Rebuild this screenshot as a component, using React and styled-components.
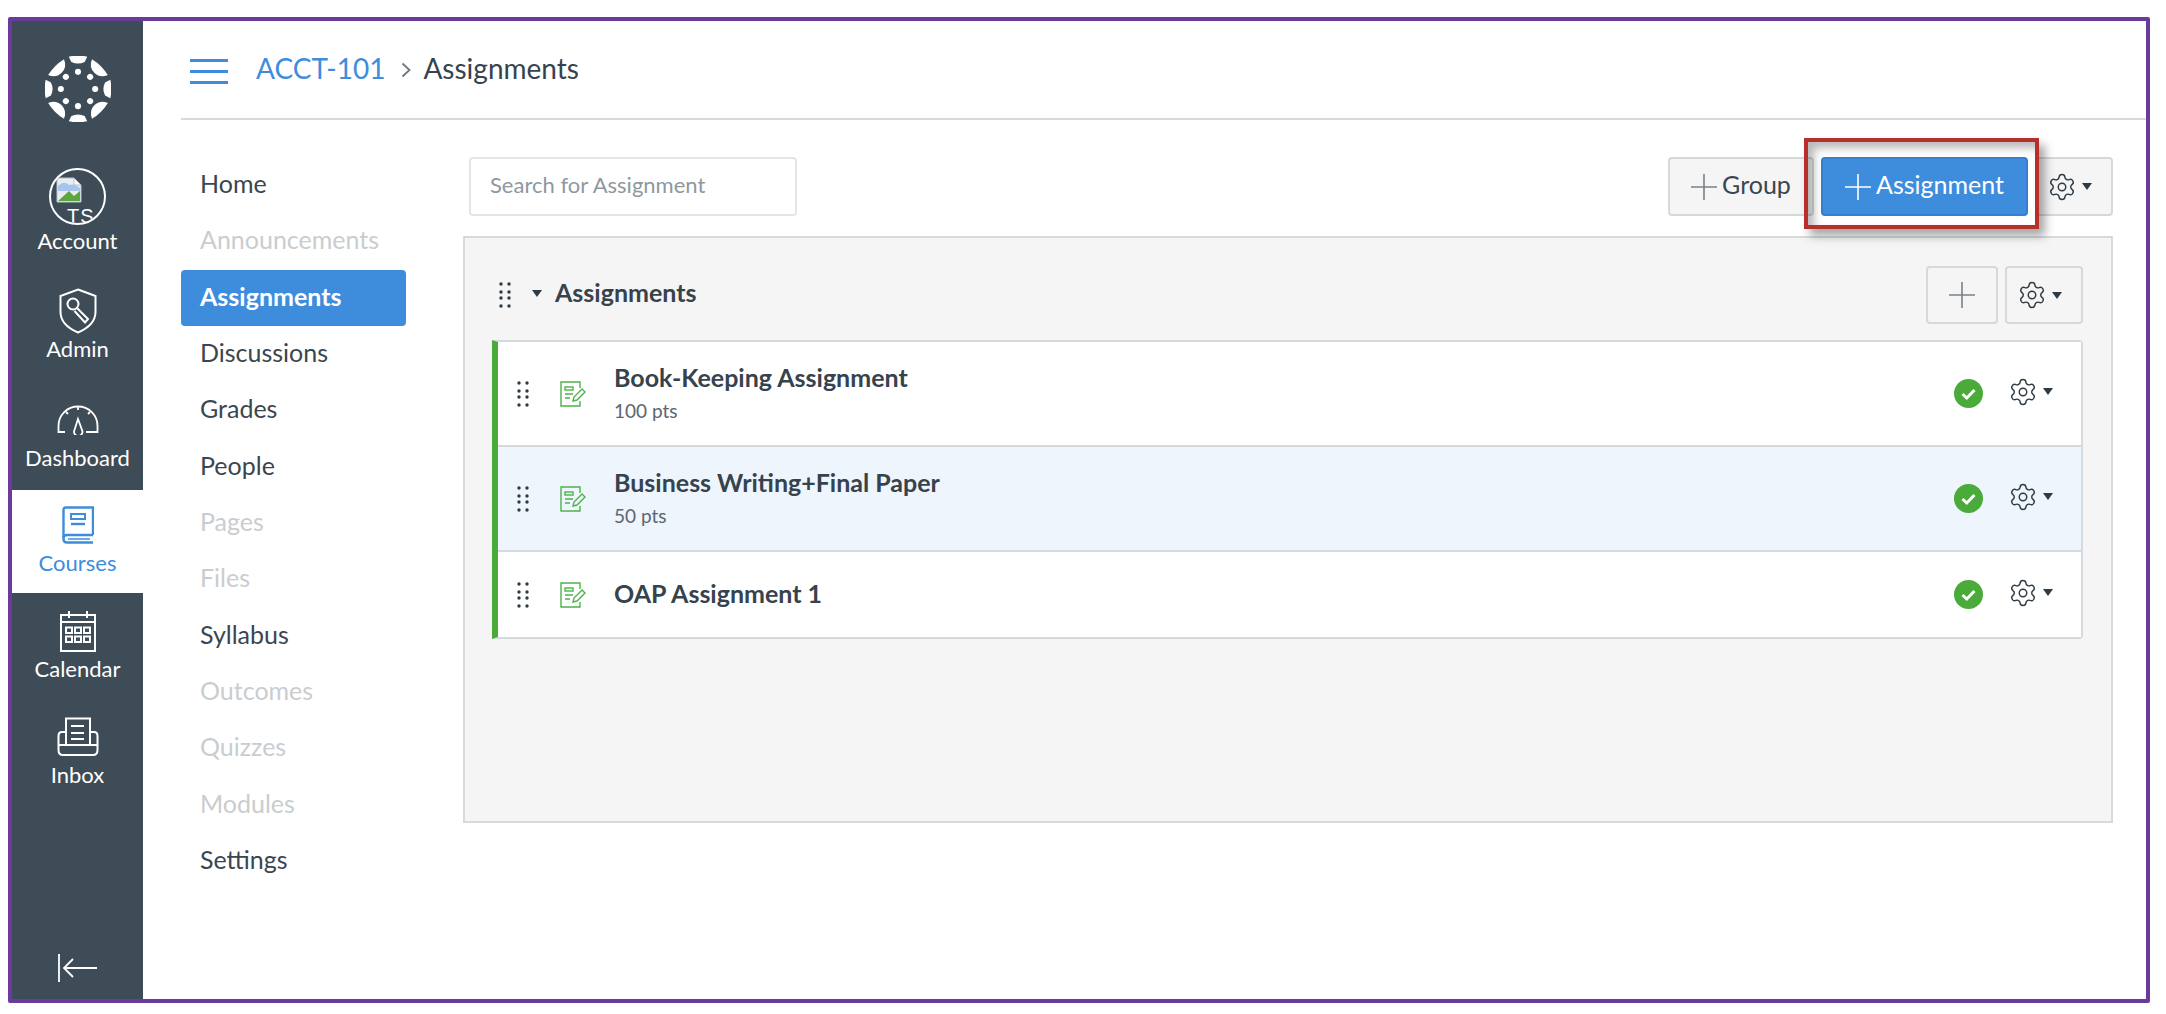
import React from "react";
import styled, { createGlobalStyle } from "styled-components";
import { Settings } from "lucide-react";

const GlobalStyle = createGlobalStyle`
  * { box-sizing: border-box; }
  body {
    margin: 0;
    background: #fff;
    font-family: "Lato", "Open Sans", sans-serif;
    color: #2d3b45;
  }
`;

const CanvasLogo = () => (
  <svg width="66" height="66" viewBox="0 0 100 100" fill="#fff">
    {[0, 90, 180, 270].map((r) => (
      <g key={r} transform={`rotate(${r} 50 50)`}>
        <path d="M36 1Q50 -2 64 1L60 9Q50 14 40 9Z" />
        <circle cx="50" cy="24" r="4.6" />
      </g>
    ))}
    {[45, 135, 225, 315].map((r) => (
      <g key={r} transform={`rotate(${r} 50 50)`}>
        <path d="M33 3Q50 -1 67 3Q62 15 50 15Q38 15 33 3Z" />
        <circle cx="50" cy="24" r="4.6" />
      </g>
    ))}
  </svg>
);

const BrokenImage = () => (
  <svg width="26" height="26" viewBox="0 0 26 26">
    <path d="M1 1H18L25 8V25H1Z" fill="#e8edf3" stroke="#b9c0c8" />
    <path d="M2 9Q8 3 13 8Q18 6 24 11V14H2Z" fill="#a9c4ec" />
    <path d="M2 24L13 14L18 19L24 14V24Z" fill="#5da63f" />
    <path d="M18 1V8H25Z" fill="#fff" stroke="#b9c0c8" />
  </svg>
);

const AdminIcon = () => (
  <svg width="38" height="46" viewBox="0 0 38 46" fill="none" stroke="currentColor" strokeWidth="2">
    <path d="M19 1.5L36.5 8V24Q36.5 37 19 44.5Q1.5 37 1.5 24V8Z" />
    <circle cx="14" cy="16" r="5.5" />
    <path d="M18 20L29 31L26 34.5L15.5 23" />
  </svg>
);

const DashboardIcon = () => (
  <svg width="42" height="30" viewBox="0 0 42 30" fill="none" stroke="currentColor" strokeWidth="1.8">
    <path d="M8 27H1.5V21A19.5 19.5 0 0 1 40.5 21V27H29" />
    <path d="M21 14L25 25A4.2 4.2 0 1 1 17.5 25Z" />
    <path d="M21 2V5M9 7L11 9M33 7L31 9" />
  </svg>
);

const CourseIcon = () => (
  <svg width="32" height="38" viewBox="0 0 32 38" fill="none" stroke="currentColor" strokeWidth="2.4">
    <path d="M31 29V1.5H4Q1.5 1.5 1.5 4V33Q1.5 36.5 5 36.5H31" />
    <path d="M1.5 32Q1.5 29 5 29H31" />
    <path d="M6 33H28" strokeWidth="1.5" />
    <rect x="9" y="8" width="14" height="5" strokeWidth="2" />
    <path d="M9 18H23" />
  </svg>
);

const CalendarIcon = () => (
  <svg width="36" height="42" viewBox="0 0 36 42" fill="none" stroke="currentColor" strokeWidth="2">
    <rect x="1" y="5" width="34" height="36" />
    <path d="M9 1V8M27 1V8M1 12H35" />
    {[9, 18, 27].map((x) =>
      [20, 29].map((y) => (
        <rect key={`${x}-${y}`} x={x - 3} y={y - 2.5} width="6" height="5.5" />
      ))
    )}
  </svg>
);

const InboxIcon = () => (
  <svg width="42" height="40" viewBox="0 0 42 40" fill="none" stroke="currentColor" strokeWidth="2">
    <path d="M9 29V1.5H33V29" />
    <path d="M14 9H27M14 16H27M14 22H27" />
    <path d="M9 15H5Q1.5 15 1.5 19V33Q1.5 38 6 38H36Q40.5 38 40.5 33V19Q40.5 15 37 15H33" />
    <path d="M1.5 28H40.5" />
  </svg>
);

const CollapseIcon = () => (
  <svg width="40" height="28" viewBox="0 0 40 28" fill="none" stroke="#fff" strokeWidth="1.8">
    <path d="M1 0V28M39 14H7M15 5L6 14L15 23" />
  </svg>
);

const PlusIcon = ({ color = "#77828a" }) => (
  <svg width="26" height="26" viewBox="0 0 26 26" stroke={color} strokeWidth="1.6">
    <path d="M0 13H26M13 0V26" />
  </svg>
);

const ChevronIcon = () => (
  <svg width="10" height="16" viewBox="0 0 10 16" fill="none" stroke="#6b7780" strokeWidth="1.8">
    <path d="M1.5 1.5L8.5 8L1.5 14.5" />
  </svg>
);

const DragDots = () => (
  <svg width="12" height="26" viewBox="0 0 12 26" fill="#2d3b45">
    {[2, 10].map((x) =>
      [2, 10, 16, 24].map((y) => <circle key={`${x}-${y}`} cx={x} cy={y} r="1.7" />)
    )}
  </svg>
);

const AssignmentIcon = () => (
  <svg width="26" height="26" viewBox="0 0 26 26" fill="none" stroke="#4db34a" strokeWidth="1.4">
    <path d="M20 7V1H1V25H20V20" />
    <rect x="5" y="6" width="8" height="3" />
    <path d="M5 13H13M5 17H10" />
    <path d="M13 20L14 16L22 8L25 11L17 19Z" />
  </svg>
);

const CheckBadge = () => (
  <svg width="29" height="29" viewBox="0 0 29 29">
    <circle cx="14.5" cy="14.5" r="14.5" fill="#4aab3a" />
    <path d="M8.5 15L12.8 19L20.5 11" fill="none" stroke="#fff" strokeWidth="3" />
  </svg>
);

const navLinks = [
  { label: "Home" },
  { label: "Announcements", off: true },
  { label: "Assignments", active: true },
  { label: "Discussions" },
  { label: "Grades" },
  { label: "People" },
  { label: "Pages", off: true },
  { label: "Files", off: true },
  { label: "Syllabus" },
  { label: "Outcomes", off: true },
  { label: "Quizzes", off: true },
  { label: "Modules", off: true },
  { label: "Settings" },
];

const assignments = [
  { title: "Book-Keeping Assignment", pts: "100 pts", height: 103 },
  { title: "Business Writing+Final Paper", pts: "50 pts", height: 105, highlight: true },
  { title: "OAP Assignment 1", height: 87 },
];

const Gear = ({ size = 30 }) => <Settings size={size} strokeWidth={1.15} color="#2d3b45" />;

export default function App() {
  return (
    <>
      <GlobalStyle />
      <Frame>
        <Sidebar>
          <LogoWrap>
            <CanvasLogo />
          </LogoWrap>
          <GlobalItem $height={115} $top={0}>
            <Avatar>
              <BrokenImage />
              <AvatarAlt>TS</AvatarAlt>
            </Avatar>
            <GlobalLabel>Account</GlobalLabel>
          </GlobalItem>
          <GlobalItem $height={109} $top={12}>
            <IconBox>
              <AdminIcon />
            </IconBox>
            <GlobalLabel>Admin</GlobalLabel>
          </GlobalItem>
          <GlobalItem $height={105} $top={12}>
            <IconBox>
              <DashboardIcon />
            </IconBox>
            <GlobalLabel>Dashboard</GlobalLabel>
          </GlobalItem>
          <GlobalItem $height={103} $top={12} $active>
            <IconBox>
              <CourseIcon />
            </IconBox>
            <GlobalLabel>Courses</GlobalLabel>
          </GlobalItem>
          <GlobalItem $height={109} $top={15}>
            <IconBox>
              <CalendarIcon />
            </IconBox>
            <GlobalLabel>Calendar</GlobalLabel>
          </GlobalItem>
          <GlobalItem $height={109} $top={12}>
            <IconBox>
              <InboxIcon />
            </IconBox>
            <GlobalLabel>Inbox</GlobalLabel>
          </GlobalItem>
          <CollapseWrap>
            <CollapseIcon />
          </CollapseWrap>
        </Sidebar>

        <Main>
          <Header>
            <Hamburger>
              <span />
              <span />
              <span />
            </Hamburger>
            <Crumb href="#">ACCT-101</Crumb>
            <CrumbSep>
              <ChevronIcon />
            </CrumbSep>
            <CrumbCurrent>Assignments</CrumbCurrent>
          </Header>

          <Body>
            <CourseNav>
              {navLinks.map((l) => (
                <CourseLink key={l.label} $off={l.off} $active={l.active}>
                  {l.label}
                </CourseLink>
              ))}
            </CourseNav>

            <Content>
              <Toolbar>
                <Search placeholder="Search for Assignment" />
                <Actions>
                  <Button $width={146}>
                    <PlusIcon />
                    <ButtonText>Group</ButtonText>
                  </Button>
                  <Button $width={207} $primary>
                    <PlusIcon color="#fff" />
                    <ButtonText>Assignment</ButtonText>
                  </Button>
                  <Button $width={78} $padRight={10}>
                    <Gear />
                    <Caret />
                  </Button>
                  <Callout />
                </Actions>
              </Toolbar>

              <Panel>
                <GroupHeader>
                  <DragDots />
                  <GroupCaret />
                  <GroupTitle>Assignments</GroupTitle>
                  <GroupActions>
                    <Button $width={72} $height={58}>
                      <PlusIcon />
                    </Button>
                    <Button $width={78} $height={58} $padRight={10}>
                      <Gear />
                      <Caret />
                    </Button>
                  </GroupActions>
                </GroupHeader>

                <List>
                  {assignments.map((a) => (
                    <Row key={a.title} $height={a.height} $highlight={a.highlight}>
                      <DragDots />
                      <AssignmentIcon />
                      <RowText>
                        <RowTitle>{a.title}</RowTitle>
                        {a.pts && <RowPts>{a.pts}</RowPts>}
                      </RowText>
                      <CheckBadge />
                      <RowGear>
                        <Gear />
                        <Caret />
                      </RowGear>
                    </Row>
                  ))}
                </List>
              </Panel>
            </Content>
          </Body>
        </Main>
      </Frame>
    </>
  );
}

const Frame = styled.div`
  display: flex;
  width: 2142px;
  height: 986px;
  margin: 17px 0 0 8px;
  border: 4px solid #6c3a9d;
  border-radius: 2px;
  overflow: hidden;
`;

const Sidebar = styled.nav`
  display: flex;
  flex-direction: column;
  flex: 0 0 131px;
  background: #3e4c57;
  color: #fff;
`;

const LogoWrap = styled.div`
  display: flex;
  justify-content: center;
  height: 140px;
  padding-top: 35px;
`;

const GlobalItem = styled.div`
  display: flex;
  flex-direction: column;
  align-items: center;
  height: ${(p) => p.$height}px;
  padding-top: ${(p) => p.$top}px;
  background: ${(p) => (p.$active ? "#fff" : "transparent")};
  color: ${(p) => (p.$active ? "#3e8ddd" : "#fff")};
`;

const IconBox = styled.div`
  display: flex;
  align-items: center;
  justify-content: center;
  height: 46px;
`;

const GlobalLabel = styled.div`
  margin-top: 3px;
  font-size: 22px;
  line-height: 24px;
`;

const Avatar = styled.div`
  position: relative;
  flex: 0 0 57px;
  width: 57px;
  margin-top: 7px;
  margin-bottom: 1px;
  border: 2px solid #fff;
  border-radius: 50%;
  overflow: hidden;
  padding: 7px 0 0 5px;
`;

const AvatarAlt = styled.span`
  position: absolute;
  left: 16px;
  top: 35px;
  font-family: "Liberation Sans", sans-serif;
  font-size: 20px;
  letter-spacing: 1px;
`;

const CollapseWrap = styled.div`
  display: flex;
  justify-content: center;
  margin-top: auto;
  margin-bottom: 17px;
`;

const Main = styled.div`
  flex: 1;
  display: flex;
  flex-direction: column;
  min-width: 0;
`;

const Header = styled.header`
  display: flex;
  align-items: center;
  height: 99px;
  margin-left: 38px;
  padding: 0 0 4px 9px;
  border-bottom: 2px solid #d5dade;
`;

const Hamburger = styled.div`
  display: flex;
  flex-direction: column;
  justify-content: space-between;
  width: 38px;
  height: 25px;
  margin-right: 28px;
  margin-top: 8px;

  span {
    height: 3px;
    background: #3e8ddd;
  }
`;

const Crumb = styled.a`
  font-size: 28px;
  color: #3e8ddd;
  text-decoration: none;
`;

const CrumbSep = styled.span`
  display: flex;
  margin: 4px 12px 0 16px;
`;

const CrumbCurrent = styled.span`
  font-size: 28px;
  color: #36434d;
`;

const Body = styled.div`
  display: flex;
  padding: 37px 33px 0 38px;
`;

const CourseNav = styled.div`
  display: flex;
  flex-direction: column;
  flex: 0 0 225px;
`;

const CourseLink = styled.div`
  display: flex;
  align-items: center;
  height: 56.33px;
  padding: 0 0 4px 19px;
  font-size: 25px;
  font-weight: ${(p) => (p.$active ? 700 : 400)};
  border-radius: 4px;
  background: ${(p) => (p.$active ? "#3e8ddd" : "transparent")};
  color: ${(p) => (p.$active ? "#fff" : p.$off ? "#c9cdd0" : "#3a4650")};
`;

const Content = styled.div`
  flex: 1;
  display: flex;
  flex-direction: column;
  margin-left: 57px;
  min-width: 0;
`;

const Toolbar = styled.div`
  display: flex;
  justify-content: space-between;
  margin-bottom: 20px;
  padding-left: 6px;
`;

const Search = styled.input`
  width: 328px;
  height: 59px;
  padding: 0 19px 4px;
  border: 2px solid #e3e6e9;
  border-radius: 4px;
  outline: none;
  font-family: inherit;
  font-size: 22px;
  color: #2d3b45;

  &::placeholder {
    color: #8e989f;
    opacity: 1;
  }
`;

const Actions = styled.div`
  position: relative;
  display: flex;
  gap: 7px;
`;

const Button = styled.button`
  display: flex;
  align-items: center;
  justify-content: center;
  gap: 5px;
  width: ${(p) => p.$width}px;
  height: ${(p) => p.$height || 59}px;
  padding: 0 ${(p) => p.$padRight || 0}px 0 0;
  border: 2px solid ${(p) => (p.$primary ? "#3580ce" : "#d5d9dc")};
  border-radius: 4px;
  background: ${(p) => (p.$primary ? "#3e8ddd" : "#f5f5f5")};
  color: ${(p) => (p.$primary ? "#fff" : "#3a4650")};
  font-family: inherit;
  font-size: 25px;
`;

const ButtonText = styled.span`
  padding-bottom: 6px;
`;

const Callout = styled.div`
  position: absolute;
  left: 136px;
  top: -19px;
  width: 235px;
  height: 91px;
  border: 4px solid #b62f2a;
  box-shadow: 6px 7px 9px rgba(0, 0, 0, 0.35), inset 6px 6px 8px rgba(0, 0, 0, 0.28);
  pointer-events: none;
`;

const Caret = styled.span`
  width: 0;
  height: 0;
  border-left: 5px solid transparent;
  border-right: 5px solid transparent;
  border-top: 7px solid #2d3b45;
`;

const Panel = styled.section`
  height: 587px;
  padding: 28px 28px 0 27px;
  border: 2px solid #d5dade;
  background: #f5f5f5;
`;

const GroupHeader = styled.div`
  display: flex;
  align-items: center;
  height: 58px;
  margin-bottom: 16px;
  padding-left: 7px;
`;

const GroupCaret = styled(Caret)`
  margin: 0 13px 4px 21px;
`;

const GroupTitle = styled.h2`
  margin: 0 0 6px;
  font-size: 25px;
  font-weight: 700;
  color: #36434d;
`;

const GroupActions = styled.div`
  display: flex;
  gap: 7px;
  margin-left: auto;
`;

const List = styled.div`
  border: 2px solid #d5dade;
  border-left: 6px solid #4aab3a;
  border-radius: 0 4px 4px 0;
  background: #fff;
`;

const Row = styled.div`
  display: flex;
  align-items: center;
  gap: 31px;
  height: ${(p) => p.$height}px;
  padding: 0 28px 0 19px;
  background: ${(p) => (p.$highlight ? "#eef5fd" : "#fff")};
  & + & {
    border-top: 2px solid #d5dade;
  }
`;

const RowText = styled.div`
  flex: 1;
  min-width: 0;
  margin: -4px 0 0 -3px;
`;

const RowTitle = styled.div`
  font-size: 25px;
  font-weight: 700;
  line-height: 32px;
  color: #36434d;
`;

const RowPts = styled.div`
  margin-top: 7px;
  font-size: 19px;
  line-height: 22px;
  color: #5a6670;
`;

const RowGear = styled.div`
  display: flex;
  align-items: center;
  gap: 5px;
  margin-left: -6px;
  margin-top: -4px;
`;
